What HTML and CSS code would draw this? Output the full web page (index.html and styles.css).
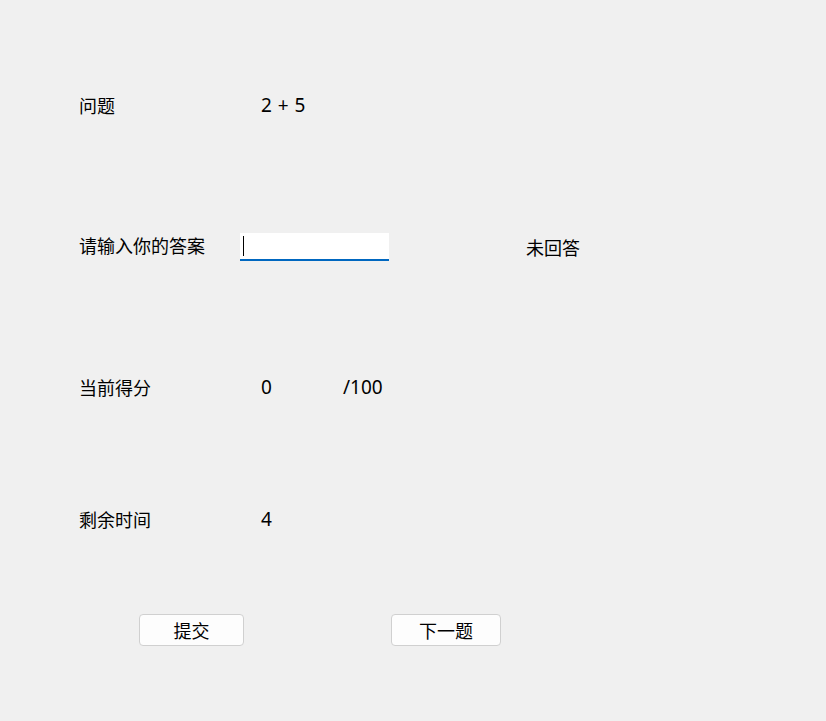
FILE: index.html
```html
<!DOCTYPE html>
<html lang="zh">
<head>
<meta charset="utf-8">
<title>答题</title>
<link rel="stylesheet" href="styles.css">
</head>
<body>
<div class="form">
  <div class="row row-q">
    <span class="label">问题</span>
    <span class="value">2 + 5</span>
  </div>
  <div class="row row-answer">
    <span class="label label-short">请输入你的答案</span>
    <div class="input"><span class="caret"></span></div>
    <span class="status">未回答</span>
  </div>
  <div class="row row-score">
    <span class="label">当前得分</span>
    <span class="value value-score">0</span>
    <span class="value">/100</span>
  </div>
  <div class="row row-time">
    <span class="label">剩余时间</span>
    <span class="value">4</span>
  </div>
  <div class="buttons">
    <button class="btn btn-submit">提交</button>
    <button class="btn btn-next">下一题</button>
  </div>
</div>
</body>
</html>
```
FILE: styles.css
```css
html, body {
  margin: 0;
  padding: 0;
  background: #f0f0f0;
}
body {
  width: 826px;
  height: 721px;
  overflow: hidden;
  font-family: "Noto Sans", "Noto Sans CJK SC", sans-serif;
  font-size: 18px;
  color: #000;
}
.form {
  display: flex;
  flex-direction: column;
  padding: 93px 0 0 79px;
}
.row {
  display: flex;
  align-items: center;
  height: 24px;
  line-height: 24px;
}
.label {
  width: 182px;
  flex: none;
  font-family: "Noto Sans CJK SC", sans-serif;
}
.label-short {
  width: 161px;
}
.value {
  font-family: "Noto Sans", sans-serif;
  font-size: 19px;
  word-spacing: 1px;
}
.value-score {
  width: 82px;
}
.row-answer {
  margin-top: 116px;
  height: 28px;
}
.row-answer .label {
  position: relative;
  top: -2px;
}
.input {
  width: 146px;
  height: 26px;
  background: #fff;
  border-bottom: 2px solid #0067c0;
  display: flex;
  align-items: center;
  padding-left: 3px;
  box-sizing: content-box;
}
.caret {
  width: 1px;
  height: 20px;
  background: #000;
}
.status {
  margin-left: 137px;
  font-family: "Noto Sans CJK SC", sans-serif;
}
.row-score {
  margin-top: 114px;
}
.row-time {
  margin-top: 108px;
}
.buttons {
  display: flex;
  margin-top: 83px;
  padding-left: 60px;
  gap: 147px;
}
.btn {
  height: 32px;
  box-sizing: border-box;
  background: #fdfdfd;
  border: 1px solid #d0d0d0;
  border-radius: 4px;
  font-family: "Noto Sans CJK SC", sans-serif;
  font-size: 18px;
  color: #000;
  padding: 0;
  line-height: 28px;
}
.btn-submit {
  width: 105px;
}
.btn-next {
  width: 110px;
}
```
